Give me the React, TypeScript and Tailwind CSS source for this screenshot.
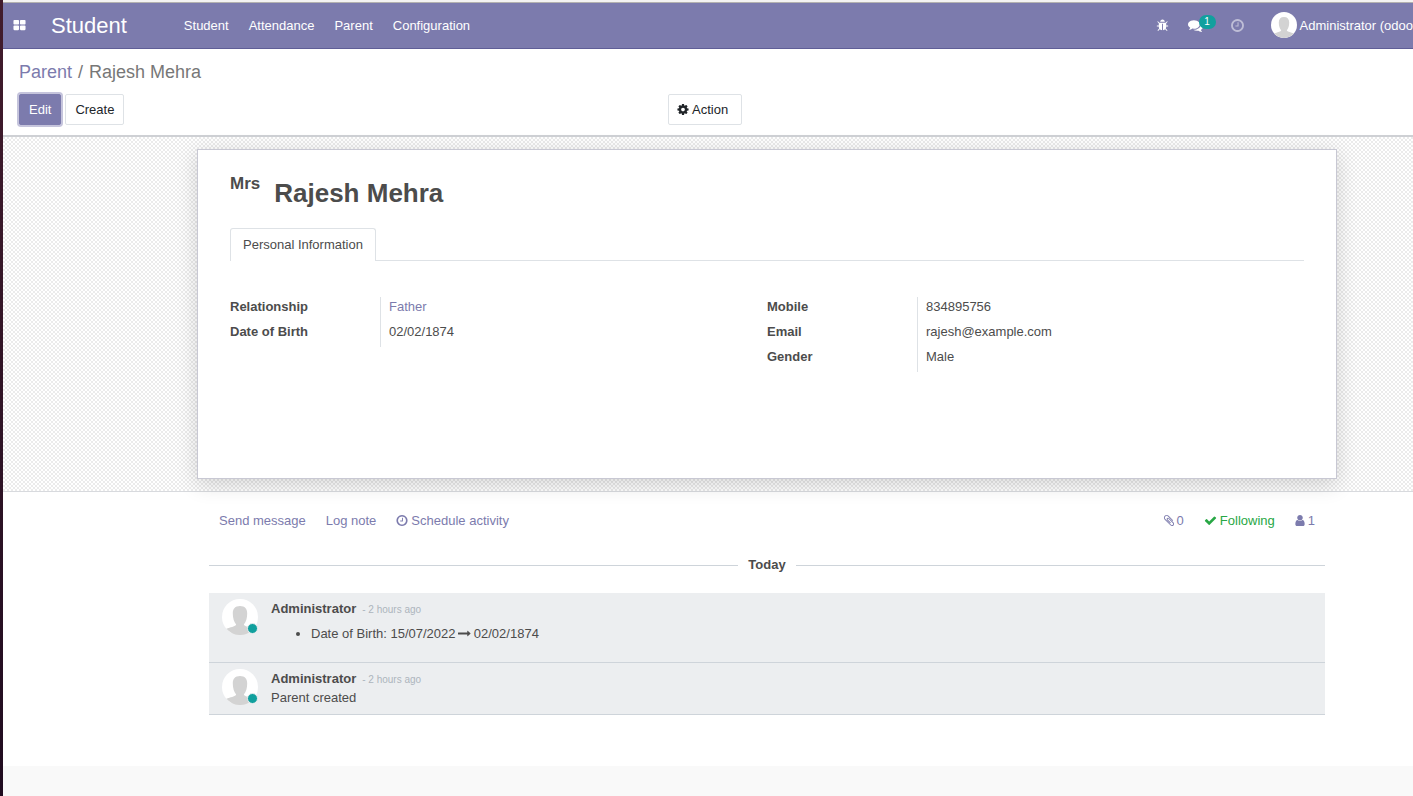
import type { ReactNode } from "react";

type IconProps = { className: string; viewBox?: string; d: string };

function Icon({ className, viewBox = "0 0 1792 1792", d }: IconProps) {
  return (
    <svg aria-hidden="true" viewBox={viewBox} className={className} fill="currentColor">
      <path d={d} />
    </svg>
  );
}

const NARROW = "128 0 1536 1792";

const paths = {
  apps: "M832 1024v384q0 52-38 90t-90 38h-512q-52 0-90-38t-38-90v-384q0-52 38-90t90-38h512q52 0 90 38t38 90zm0-768v384q0 52-38 90t-90 38h-512q-52 0-90-38t-38-90v-384q0-52 38-90t90-38h512q52 0 90 38t38 90zm896 768v384q0 52-38 90t-90 38h-512q-52 0-90-38t-38-90v-384q0-52 38-90t90-38h512q52 0 90 38t38 90zm0-768v384q0 52-38 90t-90 38h-512q-52 0-90-38t-38-90v-384q0-52 38-90t90-38h512q52 0 90 38t38 90z",
  clock: "M1024 544v448q0 14-9 23t-23 9h-320q-14 0-23-9t-9-23v-64q0-14 9-23t23-9h224v-352q0-14 9-23t23-9h64q14 0 23 9t9 23zm416 352q0-148-73-273t-198-198-273-73-273 73-198 198-73 273 73 273 198 198 273 73 273-73 198-198 73-273zm224 0q0 209-103 385.5t-279.5 279.5-385.5 103-385.5-103-279.5-279.5-103-385.5 103-385.5 279.5-279.5 385.5-103 385.5 103 279.5 279.5 103 385.5z",
  comments: "M1408 768q0 139-94 257t-256.5 186.5-353.5 68.5q-86 0-176-16-124 88-278 128-36 9-86 16h-3q-11 0-20.5-8t-11.5-21q-1-3-1-6.5t.5-6.5 2-6l2.5-5 3.5-5.5 4-5 4.5-5 4-4.5q5-6 23-25t26-29.5 22.5-29 25-38.5 20.5-44q-124-72-195-177t-71-224q0-139 94-257t256.5-186.5 353.5-68.5 353.5 68.5 256.5 186.5 94 257zm384 256q0 120-71 224.5t-195 176.5q10 24 20.5 44t25 38.5 22.5 29 26 29.5 23 25q1 1 4 4.5t4.5 5 4 5 3.5 5.5l2.5 5 2 6 .5 6.5-1 6.5q-3 14-13 22t-22 7q-50-7-86-16-154-40-278-128-90 16-176 16-271 0-472-132 58 4 88 4 161 0 309-45t264-129q125-92 192-212t67-254q0-77-23-152 129 71 204 178t75 230z",
  bug: "M1696 960q0 26-19 45t-45 19h-224q0 171-67 290l208 209q19 19 19 45t-19 45q-18 19-45 19t-45-19l-198-197q-5 5-15 13t-42 28.5-65 36.5-82 29-97 13v-896h-128v896q-51 0-101.5-13.5t-87-33-66-39-43.5-32.5l-15-14-183 207q-20 21-48 21-24 0-43-16-19-18-20.5-44.5t15.5-46.5l202-227q-58-114-58-274h-224q-26 0-45-19t-19-45 19-45 45-19h224v-294l-173-173q-19-19-19-45t19-45 45-19 45 19l173 173h844l173-173q19-19 45-19t45 19 19 45-19 45l-173 173v294h224q26 0 45 19t19 45zm-480-576h-640q0-133 93.5-226.5t226.5-93.5 226.5 93.5 93.5 226.5z",
  cog: "M1152 896q0-106-75-181t-181-75-181 75-75 181 75 181 181 75 181-75 75-181zm512-109v222q0 12-8 23t-20 13l-185 28q-19 54-39 91 35 50 107 138 10 12 10 25t-9 23q-27 37-99 108t-94 71q-12 0-26-9l-138-108q-44 23-91 38-16 136-29 186-7 28-36 28h-222q-14 0-24.5-8.5t-11.5-21.5l-28-184q-49-16-90-37l-141 107q-10 9-25 9-14 0-25-11-126-114-165-168-7-10-7-23 0-12 8-23 15-21 51-66.5t54-70.5q-27-50-41-99l-183-27q-13-2-21-12.5t-8-23.5v-222q0-12 8-23t19-13l186-28q14-46 39-92-40-57-107-138-10-12-10-24 0-10 9-23 26-36 98.5-107.5t94.5-71.5q13 0 26 10l138 107q44-23 91-38 16-136 29-186 7-28 36-28h222q14 0 24.5 8.5t11.5 21.5l28 184q49 16 90 37l142-107q9-9 24-9 13 0 25 10 129 119 165 170 7 8 7 22 0 12-8 23-15 21-51 66.5t-54 70.5q26 50 41 98l183 28q13 2 21 12.5t8 23.5z",
  check: "M1671 566q0 40-28 68l-724 724-136 136q-28 28-68 28t-68-28l-136-136-362-362q-28-28-28-68t28-68l136-136q28-28 68-28t68 28l294 295 656-657q28-28 68-28t68 28l136 136q28 28 28 68z",
  user: "M1536 1399q0 109-62.5 187t-150.5 78h-854q-88 0-150.5-78t-62.5-187q0-85 8.5-160.5t31.5-152 58.5-131 94-89 134.5-34.5q131 128 313 128t313-128q76 0 134.5 34.5t94 89 58.5 131 31.5 152 8.5 160.5zm-256-887q0 159-112.5 271.5t-271.5 112.5-271.5-112.5-112.5-271.5 112.5-271.5 271.5-112.5 271.5 112.5 112.5 271.5z",
  paperclip: "M1596 1385q0 117-79 196t-196 79q-135 0-235-100l-777-776q-113-115-113-271 0-159 110-270t269-111q158 0 273 113l605 606q10 10 10 22 0 16-30.5 46.5t-46.5 30.5q-13 0-23-10l-606-607q-79-77-181-77-106 0-179 75t-73 181q0 105 76 181l776 777q63 63 145 63 64 0 106-42t42-106q0-82-63-145l-581-581q-26-24-60-24-29 0-48 19t-19 48q0 32 25 59l410 410q10 10 10 22 0 16-31 47t-47 31q-12 0-22-10l-410-410q-63-61-63-149 0-82 57-139t139-57q88 0 149 63l581 581q100 98 100 235z",
  arrow: "M1728 893q0 14-10 24l-384 354q-16 14-35 6-19-9-19-29v-224h-1248q-14 0-23-9t-9-23v-192q0-14 9-23t23-9h1248v-224q0-21 19-29t35 5l384 350q10 10 10 23z",
};

function Avatar({ className }: { className: string }) {
  return (
    <svg viewBox="0 0 36 36" className={className} role="img" aria-label="Administrator">
      <circle cx="18" cy="18" r="18" fill="#ffffff" />
      <path
        d="M18 7c4.800 0 7.200 2.700 7.200 7.600c0 4.600-1.200 8.600-3.200 10.600v.8c1.400 1.600 5.600 2.200 9.600 3.800A18 18 0 0 1 4.400 29.800c4-1.600 8.200-2.200 9.600-3.800v-.8c-2-2-3.200-6-3.200-10.600C10.800 9.700 13.200 7 18 7z"
        fill="#d3d3d3"
      />
    </svg>
  );
}

type FieldRow = { label: string; value: ReactNode };

function FieldGroup({ rows }: { rows: FieldRow[] }) {
  return (
    <dl className="flex flex-col self-start leading-5">
      {rows.map((row) => (
        <div key={row.label} className="flex">
          <dt className="w-[150px] shrink-0 pb-[5px] font-bold">{row.label}</dt>
          <dd className="border-l border-[#dee2e6] pb-[5px] pl-2">{row.value}</dd>
        </div>
      ))}
    </dl>
  );
}

function Message({ children }: { children: ReactNode }) {
  return (
    <article className="flex gap-[13px] border-b border-[#ced4da] bg-[#eceef0] pl-[13px] pt-1.5">
      <div className="relative h-9 w-9 shrink-0">
        <Avatar className="h-9 w-9" />
        <span className="absolute bottom-px right-0 h-[11px] w-[11px] rounded-full border border-[#eceef0] bg-[#11a09e]" />
      </div>
      <div className="min-w-0 pt-px">
        <header className="flex items-baseline gap-1.5 leading-[18px]">
          <strong>Administrator</strong>
          <small className="text-[10px] leading-3.5 text-[#adb5bd]">- 2 hours ago</small>
        </header>
        {children}
      </div>
    </article>
  );
}

const menu = ["Student", "Attendance", "Parent", "Configuration"];

export default function App() {
  return (
    <div className="flex min-h-screen overflow-x-hidden bg-[#f9f9f9] font-['Liberation_Sans',Arial,sans-serif] text-[13px] text-[#4c4c4c]">
      <div className="w-[3px] shrink-0 bg-linear-to-b from-[#421c2c] to-[#200c20]" />
      <div className="flex min-w-0 grow flex-col">
        <div className="h-[3px] border-b border-[#b4b2b0] bg-[#f4f3f2]" />

        <header className="flex h-[46px] items-center whitespace-nowrap border-b border-[#5f5e97] bg-[#7c7bad] pl-2.5 text-white">
          <button type="button" aria-label="Applications" className="mr-[25px]">
            <Icon className="h-[13px] w-[13px]" d={paths.apps} />
          </button>
          <a href="#" className="mr-[57px] text-[22px]">Student</a>
          <nav className="flex gap-5">
            {menu.map((item) => (
              <a key={item} href="#">{item}</a>
            ))}
          </nav>
          <div className="ml-auto flex items-center pb-px">
            <button type="button" aria-label="Debug" className="mr-[19px]">
              <Icon className="h-[13px] w-[13px]" d={paths.bug} />
            </button>
            <button type="button" aria-label="Conversations" className="relative mr-7">
              <Icon className="h-[15px] w-[15px]" d={paths.comments} />
              <span className="absolute -top-[3px] left-[11px] h-3.5 w-[17px] rounded-full bg-[#11a09e] text-center text-[10px] leading-3.5">
                1
              </span>
            </button>
            <button type="button" aria-label="Activities" className="mr-[27px] opacity-50">
              <Icon className="h-[15px] w-[13px]" viewBox={NARROW} d={paths.clock} />
            </button>
            <button type="button" className="flex items-center gap-[3px]">
              <Avatar className="h-[26px] w-[26px]" />
              <span className="pt-0.5">Administrator (odoo</span>
            </button>
          </div>
        </header>

        <section className="border-b-2 border-[#ced0d4] bg-white px-4 pb-2.5 pt-2.5">
          <ol className="flex gap-1.5 text-[18px] leading-[27px] text-[#777777]">
            <li><a href="#" className="text-[#7c7bad]">Parent</a></li>
            <li aria-hidden="true">/</li>
            <li>Rajesh Mehra</li>
          </ol>
          <div className="mt-2 grid grid-cols-[47.1%_1fr]">
            <div className="flex gap-1">
              <button type="button" className="h-[31px] rounded-[2px] border border-[#7c7bad] bg-[#7c7bad] px-[9px] text-white ring-2 ring-[#c5c4dc]">
                Edit
              </button>
              <button type="button" className="h-[31px] rounded-[2px] border border-[#dee2e6] bg-white px-[9px] text-[#212529]">
                Create
              </button>
            </div>
            <button type="button" className="flex h-[31px] items-center gap-[3px] justify-self-start rounded-[2px] border border-[#dee2e6] bg-white pl-2 pr-[13px] text-[#212529]">
              <Icon className="h-[13px] w-3" viewBox={NARROW} d={paths.cog} />
              Action
            </button>
          </div>
        </section>

        <main className="bg-white pb-[51px]">
          <div className="border-b border-[#d8dade] bg-[repeating-conic-gradient(#ffffff_0_25%,#ebebeb_0_50%)] bg-[length:4px_4px] bg-clip-padding py-3 pl-[194px] pr-[76px]">
            <div className="min-h-[330px] border border-[#c8c8d3] bg-white px-8 pt-6 shadow-[0_5px_20px_0_rgba(0,0,0,0.16)]">
              <div className="flex gap-3.5 font-bold">
                <span className="text-[17px] leading-[19px]">Mrs</span>
                <h1 className="text-[26px] leading-[38px]">Rajesh Mehra</h1>
              </div>
              <div role="tablist" className="mt-4 flex border-b border-[#dee2e6]">
                <button type="button" role="tab" aria-selected="true" className="-mb-px h-[33px] rounded-t-[3px] border border-b-0 border-[#dee2e6] bg-white px-3">
                  Personal Information
                </button>
              </div>
              <div role="tabpanel" className="mt-9 grid grid-cols-2">
                <FieldGroup
                  rows={[
                    { label: "Relationship", value: <a href="#" className="text-[#7c7bad]">Father</a> },
                    { label: "Date of Birth", value: "02/02/1874" },
                  ]}
                />
                <FieldGroup
                  rows={[
                    { label: "Mobile", value: "834895756" },
                    { label: "Email", value: "rajesh@example.com" },
                    { label: "Gender", value: "Male" },
                  ]}
                />
              </div>
            </div>
          </div>

          <section className="pl-[206px] pr-[88px] pt-[13px]">
            <div className="flex h-[31px] items-center gap-5 px-2.5 text-[#7c7bad]">
              <button type="button">Send message</button>
              <button type="button">Log note</button>
              <button type="button" className="flex items-center gap-[3px]">
                <Icon className="h-[13px] w-3" viewBox={NARROW} d={paths.clock} />
                Schedule activity
              </button>
              <div className="ml-auto flex items-center gap-5">
                <button type="button" aria-label="0 attachments" className="flex items-center gap-0.5">
                  <Icon className="h-[13px] w-3" viewBox="192 0 1408 1792" d={paths.paperclip} />0
                </button>
                <button type="button" className="flex items-center gap-[3px] text-[#28a745]">
                  <Icon className="h-[13px] w-[13px]" d={paths.check} />
                  Following
                </button>
                <button type="button" aria-label="1 follower" className="flex items-center gap-[3px]">
                  <Icon className="h-[13px] w-2.5" viewBox="256 0 1280 1792" d={paths.user} />1
                </button>
              </div>
            </div>

            <div className="mb-[18px] mt-[19px] flex items-center gap-2.5 font-bold leading-5">
              <span className="h-px grow bg-[#ced4da]" />
              Today
              <span className="h-px grow bg-[#ced4da]" />
            </div>

            <Message>
              <ul className="mb-[18px] mt-1.5 list-disc pl-10 leading-5">
                <li>
                  Date of Birth: 15/07/2022{" "}
                  <Icon className="-mx-px inline h-[13px] w-[13px] align-[-2px]" d={paths.arrow} />{" "}
                  02/02/1874
                </li>
              </ul>
            </Message>
            <Message>
              <p className="mb-1.5 leading-5">Parent created</p>
            </Message>
          </section>
        </main>
      </div>
    </div>
  );
}
